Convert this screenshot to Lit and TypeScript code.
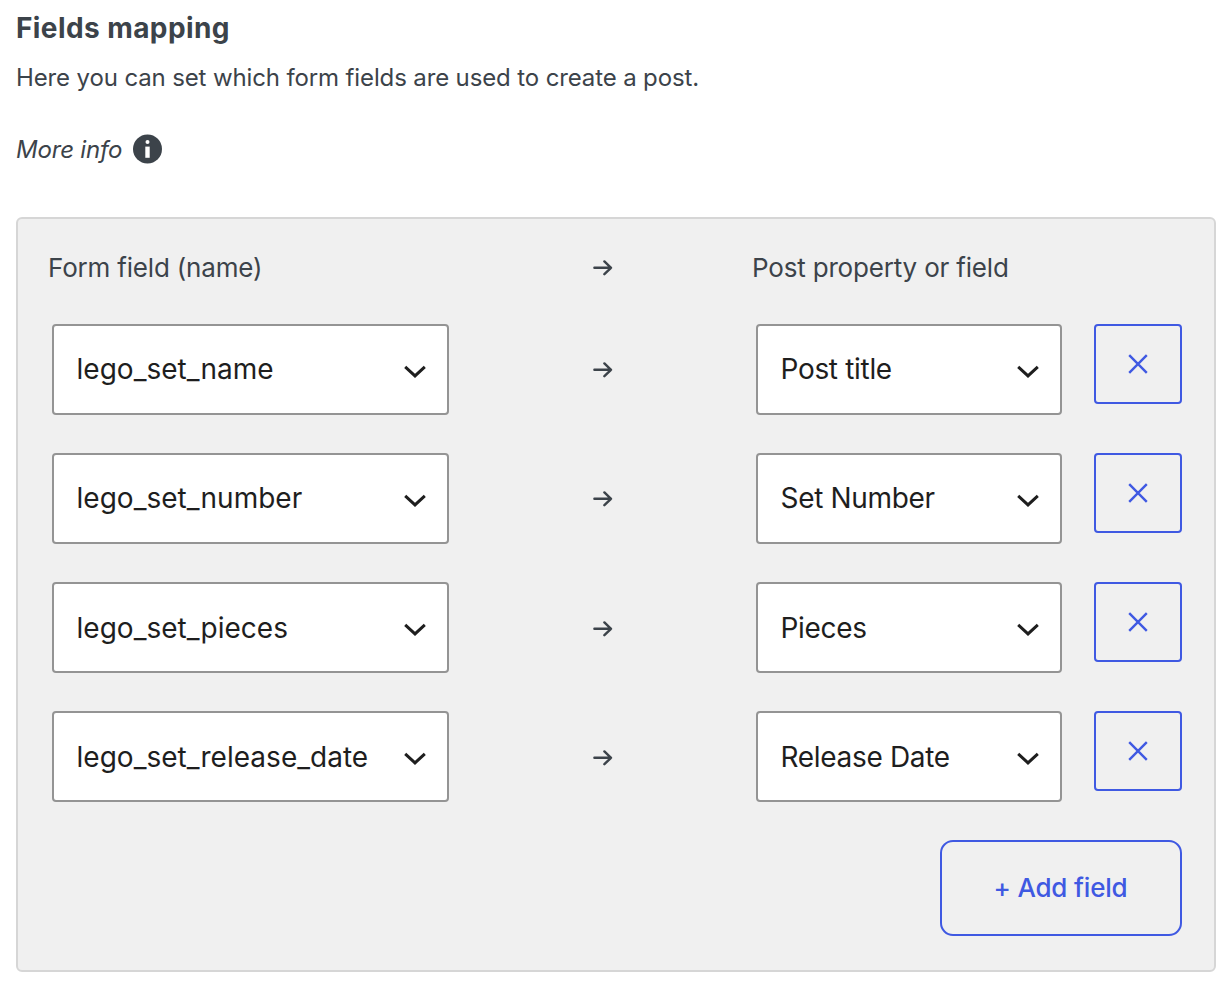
import { LitElement, html, css } from "lit";
import { customElement, property } from "lit/decorators.js";

@customElement("arrow-icon")
class ArrowIcon extends LitElement {
  static styles = css`
    :host { display: block; width: 20px; height: 16px; }
    .icon { display: block; fill: none; stroke: #3c434a; stroke-width: 2.4; stroke-linecap: round; stroke-linejoin: round; }
  `;
  render() {
    return html`<svg class="icon" width="20" height="16" viewBox="0 0 20 16">
      <path d="M1.4 7.8H18M11.4 1.4L18 7.8L11.4 14.2" />
    </svg>`;
  }
}

@customElement("select-box")
class SelectBox extends LitElement {
  @property() value = "";
  static styles = css`
    :host { display: block; }
    .box {
      box-sizing: border-box; height: 91px; padding: 0 21px 0 22.5px;
      display: flex; align-items: center; justify-content: space-between;
      background: #fff; border: 2px solid #949494; border-radius: 4px;
      color: #1e1e1e; font-size: 28px; line-height: 32px; white-space: nowrap;
    }
    .value { padding-bottom: var(--text-lift, 2px); }
    .icon { display: block; margin-top: 4px; fill: none; stroke: #1e1e1e; stroke-width: 3; flex: none; }
  `;
  render() {
    return html`<div class="box">
      <span class="value">${this.value}</span>
      <svg class="icon" width="22" height="14" viewBox="0 0 22 14"><path d="M1.2 1.9L11 10.9L20.8 1.9" /></svg>
    </div>`;
  }
}

@customElement("app-root")
class AppRoot extends LitElement {
  rows = [
    ["lego_set_name", "Post title"],
    ["lego_set_number", "Set Number"],
    ["lego_set_pieces", "Pieces"],
    ["lego_set_release_date", "Release Date"],
  ];

  static styles = css`
    :host {
      display: block; box-sizing: border-box; height: 988px; padding: 10px 14px 0 16px;
      background: #fff; color: #3c434a; font-family: Inter, sans-serif;
    }
    h2, p { margin: 0; white-space: nowrap; }
    .title { font-size: 28px; font-weight: 700; line-height: 36px; letter-spacing: 0.42px; }
    .lead { margin-top: 16px; font-size: 24px; line-height: 32px; letter-spacing: -0.13px; }
    .more { display: flex; align-items: center; gap: 11px; margin-top: 39px; height: 32px; font-size: 24px; font-style: italic; line-height: 32px; letter-spacing: -0.2px; }
    .more span { padding-top: 2px; }
    .info { display: block; }
    .panel {
      box-sizing: border-box; height: 755px; margin-top: 52px; padding: 33px 32px 0 30px;
      background: #f0f0f0; border: 2px solid #d6d6d6; border-radius: 6px;
    }
    .grid { display: grid; grid-template-columns: 401px 303px 310px 120px; }
    .head { height: 72px; align-items: start; font-size: 26px; line-height: 32px; letter-spacing: -0.18px; white-space: nowrap; }
    .head arrow-icon { margin-top: 8px; }
    .row { height: 129px; align-items: start; }
    .row .arrow { padding-top: 38px; }
    .row.late { --text-lift: 0px; }
    .row.late .arrow { padding-top: 39px; }
    arrow-icon { margin-left: 144px; }
    .from, .to { padding-left: 4px; }
    .from { letter-spacing: 0.02px; }
    .to { letter-spacing: -0.32px; }
    .remove {
      display: flex; align-items: center; justify-content: center; box-sizing: border-box;
      width: 88px; height: 80px; margin: 0 0 0 32px; padding: 0;
      background: transparent; border: 2px solid #3f59e2; border-radius: 4px;
    }
    .cross { display: block; fill: none; stroke: #3f59e2; stroke-width: 2.4; }
    .foot { display: flex; justify-content: flex-end; }
    .add {
      box-sizing: border-box; width: 242px; height: 96px; padding: 0 1px 0 0;
      background: transparent; border: 2px solid #3f59e2; border-radius: 13px;
      color: #3f59e2; font: 550 26px/32px Inter, sans-serif; letter-spacing: -0.18px;
    }
  `;

  render() {
    return html`
      <h2 class="title">Fields mapping</h2>
      <p class="lead">Here you can set which form fields are used to create a post.</p>
      <div class="more">
        <span>More info</span>
        <svg class="info" width="30" height="30" viewBox="0 0 30 30">
          <circle cx="14.5" cy="15" r="14.5" fill="#3c434a" />
          <circle cx="14.5" cy="7.9" r="2" fill="#fff" />
          <path d="M12.3 12.6h4.4v11.2h-4.4z" fill="#fff" />
        </svg>
      </div>
      <section class="panel">
        <div class="grid head">
          <span>Form field (name)</span>
          <arrow-icon></arrow-icon>
          <span>Post property or field</span>
        </div>
        ${this.rows.map(([from, to], i) => html`
          <div class="grid row ${i > 1 ? "late" : ""}">
            <div class="from"><select-box .value=${from}></select-box></div>
            <div class="arrow"><arrow-icon></arrow-icon></div>
            <div class="to"><select-box .value=${to}></select-box></div>
            <button class="remove" aria-label="Remove">
              <svg class="cross" width="20" height="20" viewBox="0 0 20 20"><path d="M1.2 1.2L18.8 18.8M18.8 1.2L1.2 18.8" /></svg>
            </button>
          </div>`)}
        <div class="foot"><button class="add">+ Add field</button></div>
      </section>
    `;
  }
}
